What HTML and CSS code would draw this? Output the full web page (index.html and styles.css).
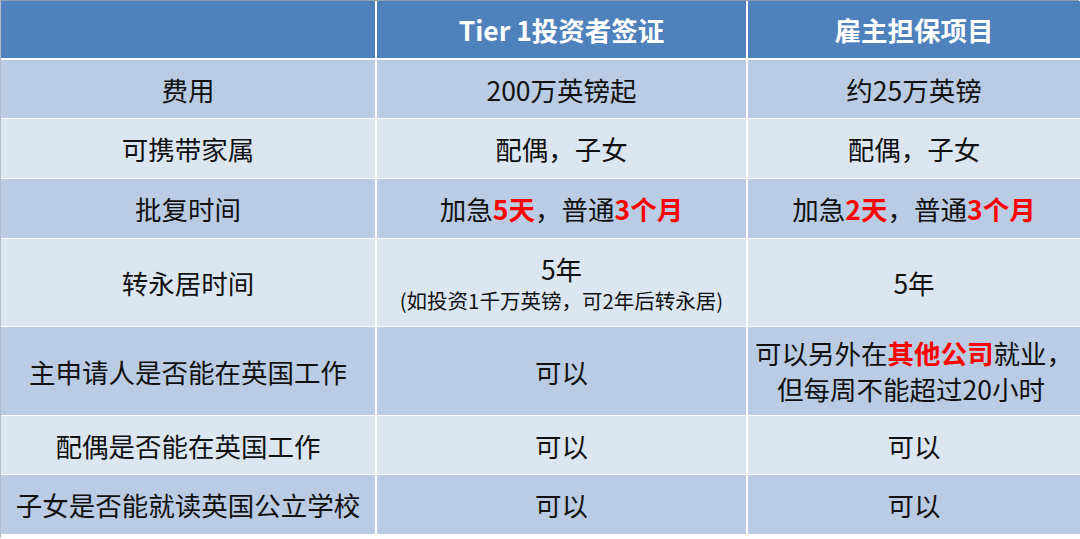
FILE: index.html
```html
<!DOCTYPE html>
<html lang="zh-CN">
<head>
<meta charset="utf-8">
<link rel="stylesheet" href="styles.css">
</head>
<body>
<div class="page">
  <div class="table">
    <div class="cell head"></div>
    <div class="cell head">Tier 1投资者签证</div>
    <div class="cell head">雇主担保项目</div>

    <div class="cell dark">费用</div>
    <div class="cell dark">200万英镑起</div>
    <div class="cell dark">约25万英镑</div>

    <div class="cell light">可携带家属</div>
    <div class="cell light">配偶，子女</div>
    <div class="cell light">配偶，子女</div>

    <div class="cell dark">批复时间</div>
    <div class="cell dark">加急<b class="red">5天</b>，普通<b class="red">3个月</b></div>
    <div class="cell dark">加急<b class="red">2天</b>，普通<b class="red">3个月</b></div>

    <div class="cell light">转永居时间</div>
    <div class="cell light stack"><span>5年</span><span class="small">(如投资1千万英镑，可2年后转永居)</span></div>
    <div class="cell light">5年</div>

    <div class="cell dark">主申请人是否能在英国工作</div>
    <div class="cell dark">可以</div>
    <div class="cell dark stack two"><span>可以另外在<b class="red">其他公司</b>就业，</span><span class="indent">但每周不能超过20小时</span></div>

    <div class="cell light">配偶是否能在英国工作</div>
    <div class="cell light">可以</div>
    <div class="cell light">可以</div>

    <div class="cell dark">子女是否能就读英国公立学校</div>
    <div class="cell dark">可以</div>
    <div class="cell dark">可以</div>
  </div>
</div>
</body>
</html>
```
FILE: styles.css
```css
html, body {
  margin: 0;
  padding: 0;
  background: #ffffff;
}
body {
  width: 1080px;
  height: 539px;
  overflow: hidden;
  font-family: "Noto Sans CJK SC", "Noto Sans", sans-serif;
}
.page {
  border-top: 1px solid #8e9cb4;
  border-left: 1px solid #b4bccb;
  width: 1079px;
  height: 538px;
  box-sizing: border-box;
}
.table {
  display: grid;
  grid-template-columns: 374px 369px 332px;
  grid-template-rows: 58px 58px 59px 59px 87px 88px 58px 59px;
  column-gap: 2px;
  row-gap: 1px;
  background: #ffffff;
}
.cell {
  display: flex;
  align-items: center;
  justify-content: center;
  text-align: center;
  font-size: 26.5px;
  color: #111111;
  white-space: nowrap;
}
.head {
  background: #4f81bd;
  color: #ffffff;
  font-weight: bold;
  margin-bottom: 1px;
}
.dark {
  background: #b9cce4;
}
.light {
  background: #dce6f1;
}
.red {
  color: #ff0000;
  font-weight: bold;
}
.stack {
  flex-direction: column;
  line-height: 35px;
}
.two {
  line-height: 36px;
}
.small {
  font-size: 20.5px;
  line-height: 28px;
}
.indent {
  padding-right: 6px;
}
```
